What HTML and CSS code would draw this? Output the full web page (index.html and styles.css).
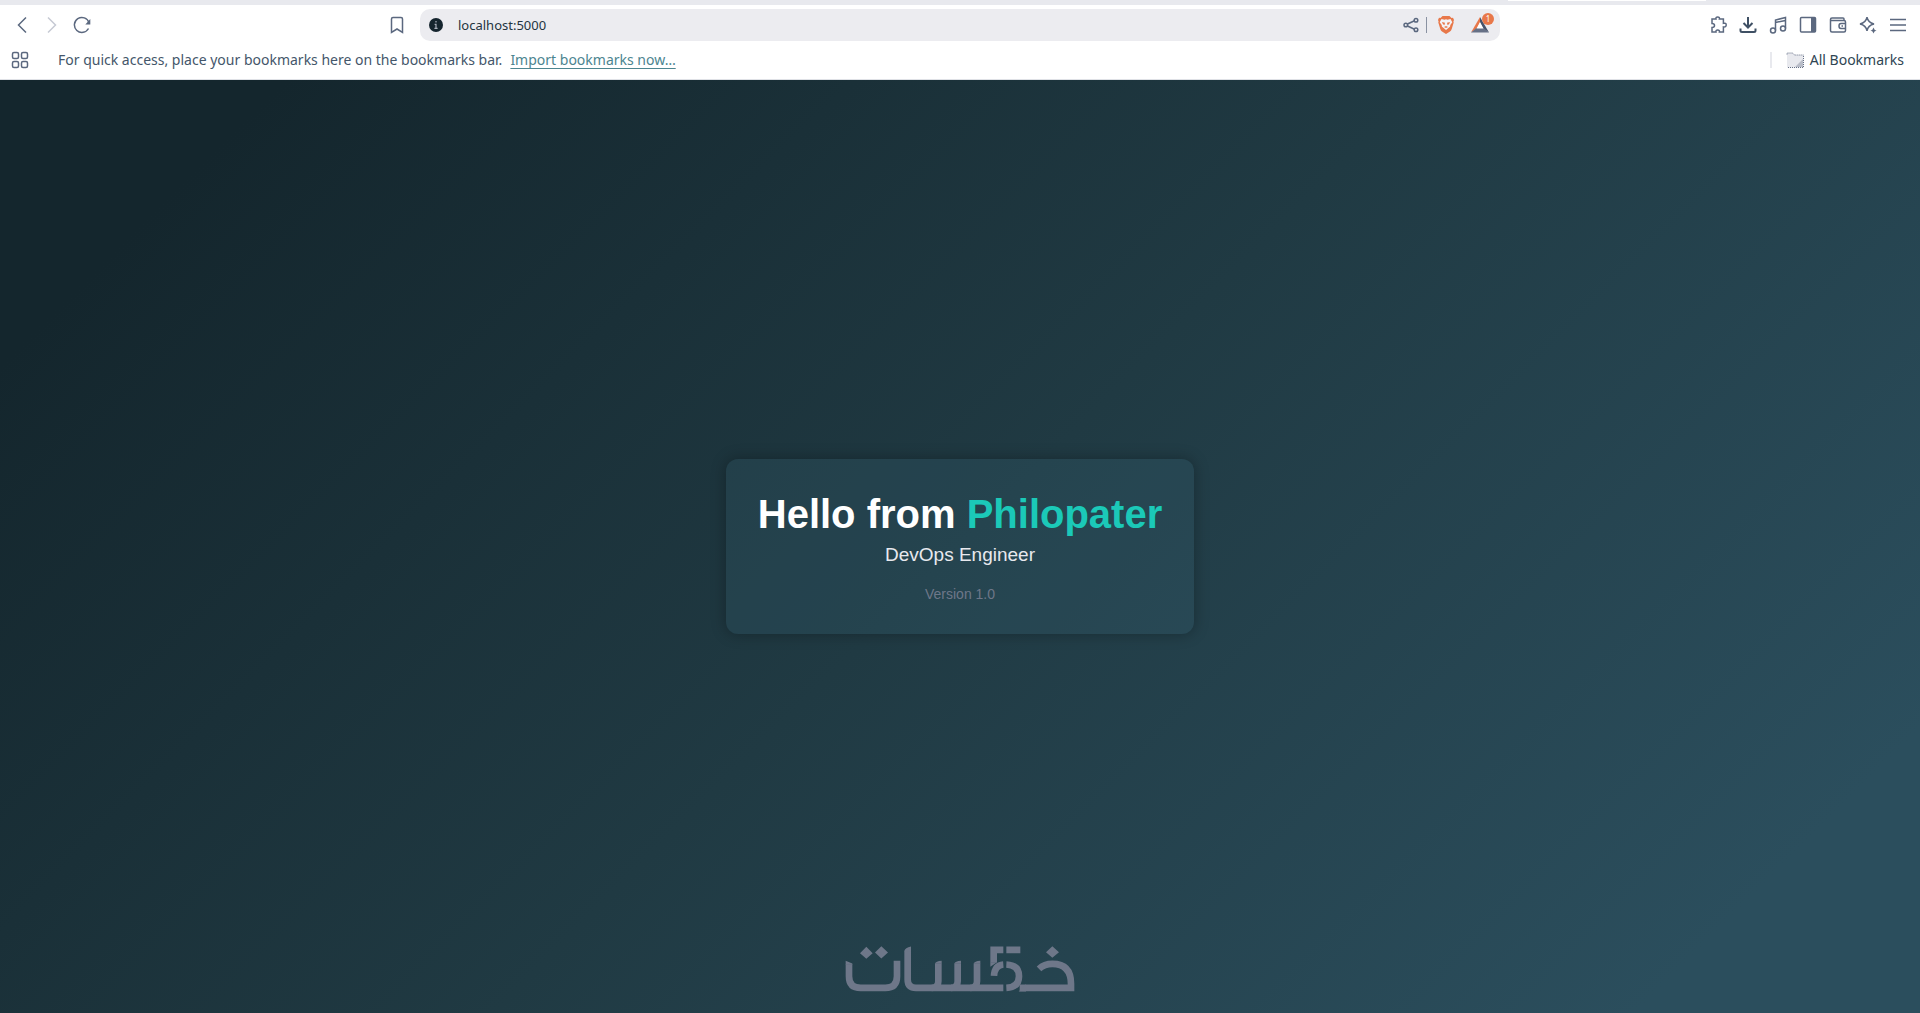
FILE: index.html
```html
<!DOCTYPE html>
<html lang="en">
<head>
<meta charset="utf-8">
<meta name="viewport" content="width=device-width, initial-scale=1">
<title>Hello from Philopater</title>
<link rel="stylesheet" href="styles.css">
</head>
<body>
<header class="browser">
  <div class="tabstrip"><span class="active-tab"></span></div>
  <div class="toolbar">
    <nav class="nav" aria-label="Navigation">
      <button class="icon-btn" aria-label="Back"><svg class="icon" viewBox="0 0 18 18"><path d="M13 1.500 5.500 9 13 16.500"/></svg></button>
      <button class="icon-btn disabled" aria-label="Forward" disabled><svg class="icon" viewBox="0 0 18 18"><path d="M5 1.500 12.500 9 5 16.500"/></svg></button>
      <button class="icon-btn" aria-label="Reload"><svg class="icon" viewBox="0 0 18 18"><path d="M15.500 12.500A7.500 7.500 0 1 1 16 6.500"/><path class="solid" d="M17.300 3v5.500h-5z"/></svg></button>
      <button class="icon-btn bookmark" aria-label="Bookmark this page"><svg class="icon" viewBox="0 0 18 18"><path d="M3.500 16.500V3q0-1.500 1.500-1.500h8q1.500 0 1.500 1.500v13.500L9 13z"/></svg></button>
    </nav>
    <form class="address">
      <svg class="info" viewBox="0 0 14 14"><circle cx="7" cy="7" r="7" fill="#15252e"/><path d="M7 3v1.600M5.600 6.300H7v4M5.400 10.300h3.200" stroke="#aab0bb" stroke-width="1.200" fill="none"/></svg>
      <input class="url" type="text" value="localhost:5000" aria-label="Address">
      <button type="button" class="icon-btn" aria-label="Share"><svg class="icon" viewBox="0 0 18 18"><path d="M5.500 8 12.500 4.700M5.500 10l7 3.300"/><circle cx="3.800" cy="9" r="1.800"/><circle cx="14" cy="4.200" r="1.800"/><circle cx="14" cy="13.800" r="1.800"/></svg></button>
      <span class="divider"></span>
      <button type="button" class="icon-btn shield" aria-label="Shields"><svg class="icon" viewBox="0 0 18 18"><path fill="#e8784a" stroke="none" d="M5.500 0h7l2 2 1.500-.2 1 2.200-.6 1.500.3 1-2 6.500q-.5 1.500-1.700 2.500L9 18l-4-2.500Q3.800 14.500 3.300 13l-2-6.500.3-1L1 4l1-2.200 1.500.2z"/><path fill="#f3f3f6" stroke="none" d="m4.500 3 3 .7L9 3.300l1.500.4 3-.7 1.800 3.200-2 2.900q.3 1.900-1.300 2.500L9 14l-3-2.400q-1.600-.6-1.300-2.500l-2-2.900z"/><path fill="#e8784a" stroke="none" d="m5 6 3 .8-.6 2.400L5.800 8zM13 6l-3 .8.6 2.400L12.200 8zM7 11l2-1 2 1-2 .9z"/></svg></button>
      <button type="button" class="icon-btn rewards" aria-label="Rewards, 1 notification"><svg class="icon" viewBox="0 0 18 18"><path fill="#e8784a" stroke="none" d="M9 1 0 16.500l6-4L9 7z"/><path fill="#46536b" stroke="none" d="m9 1 9 15.500-6-4L9 7z"/><path fill="#667086" stroke="none" d="M0 16.500 5.500 12h7l5.500 4.500z"/><path fill="#fff" stroke="none" d="m9 6 3.500 6.500h-7z"/></svg><span class="badge">1</span></button>
    </form>
    <div class="tools">
      <button class="icon-btn" aria-label="Extensions"><svg class="icon" viewBox="0 0 18 18"><path d="M3 3h4q-.5-2 1.700-2t1.700 2h4v4.300q2.800-.5 2.800 1.700t-2.800 1.900V16h-4q.4-2-1.700-2T7 16H3v-4.500q2.500 0 2.500-2T3 7.500z"/></svg></button>
      <button class="icon-btn strong" aria-label="Downloads"><svg class="icon" viewBox="0 0 18 18"><path d="M9 1v10M4.500 7 9 11.500 13.500 7M1.500 12.500v2q0 1.500 1.500 1.500h12q1.500 0 1.500-1.500v-2"/></svg></button>
      <button class="icon-btn" aria-label="Media"><svg class="icon" viewBox="0 0 18 18"><path d="M6.500 14.500V4L16.500 1.500v11M6.500 6.500l10-2"/><circle cx="4" cy="14.500" r="2.500"/><circle cx="14" cy="12.500" r="2.500"/></svg></button>
      <button class="icon-btn" aria-label="Side panel"><svg class="icon" viewBox="0 0 18 18"><rect x="1.500" y="1.500" width="15" height="14.500" rx="1"/><path class="solid" d="M12 2h4.500v14H12z"/></svg></button>
      <button class="icon-btn" aria-label="Wallet"><svg class="icon" viewBox="0 0 18 18"><path d="M15 4.500V3q0-1-1-1H3q-1.500 0-1.500 1.500v11Q1.500 16 3 16h12q1.500 0 1.500-1.500V6q0-1.500-1.500-1.500H2M16.500 7.500H12q-2 0-2 2.500t2 2.500h4.500M12.500 10h1.500"/></svg></button>
      <button class="icon-btn" aria-label="Assistant"><svg class="icon" viewBox="0 0 18 18"><path d="M8 1.200q1 5.500 7 6.800-6 1.300-7 6.800Q7 9.300 1 8q6-1.300 7-6.800z"/><path class="solid" d="M14.500 11.500q.5 2.500 3 3-2.500.5-3 3-.5-2.500-3-3 2.500-.5 3-3z"/></svg></button>
      <button class="icon-btn" aria-label="Menu"><svg class="icon" viewBox="0 0 18 18"><path d="M1 3.500h16M1 9h16M1 14.500h16"/></svg></button>
    </div>
  </div>
  <div class="bookmarks">
    <button class="icon-btn" aria-label="Apps"><svg class="icon" viewBox="0 0 18 18"><rect x="1.500" y="1.500" width="6" height="6" rx="1.500"/><rect x="10.500" y="1.500" width="6" height="6" rx="1.500"/><rect x="1.500" y="10.500" width="6" height="6" rx="1.500"/><rect x="10.500" y="10.500" width="6" height="6" rx="1.500"/></svg></button>
    <p class="hint"><span>For quick access, place your bookmarks here on the bookmarks bar.</span><a class="import" href="#">Import bookmarks now…</a></p>
    <button class="all"><svg class="folder" viewBox="0 0 18 16"><path fill="#e8e9ee" d="M1 1h6l2 2h8.500v12.500H1z"/><path d="M1 2.500V1h5.500l2 2h9M17.500 4v11.500H2" fill="none" stroke="#667086" stroke-dasharray="1 1"/><path d="m17 7-8 8h8z" fill="#b9bdc8"/></svg>All Bookmarks</button>
  </div>
</header>
<main class="page">
  <section class="card">
    <h1 class="title">Hello from <span class="name">Philopater</span></h1>
    <p class="role">DevOps Engineer</p>
    <p class="version">Version 1.0</p>
  </section>
  <svg class="watermark" viewBox="44 50 690 137" role="img" aria-label="خمسات">
    <g fill="none" stroke="#6e7789" stroke-width="20">
      <path d="M56 104v36q0 35 35 35h74q35 0 35-35V94"/>
      <path d="M232 64v86q0 25 25 25h262"/>
      <path d="M324 102v53q0 20-20 20M382 102v53q0 20-20 20M440 102v53q0 20-20 20"/>
      <path d="M519 61h-29v38M528 61h42"/>
      <path d="M519 105q-26 2-28 34M528 105q38 2 38 35t-38 35"/>
      <path d="M626 118q16-15 40-15 56 0 56 60v12H568"/>
    </g>
    <g fill="#6e7789"><path d="m108 52 19 19-19 17-19-17zM153 50l20 19-20 18-19-18zM666 50l20 18-20 17-19-17zM565 186l22-22v22z"/><path d="m46 94 20 8v4H46zM222 65q2-10 20-14v14zM314 103q2-8 20-9v9zM372 103q2-8 20-9v9zM430 103q2-8 20-9v9zM480 98h20l-20 14z"/></g>
  </svg>
</main>
</body>
</html>
```
FILE: styles.css
```css
* { box-sizing: border-box; }

body {
  margin: 0;
  min-height: 100vh;
  display: flex;
  flex-direction: column;
  font-family: "Liberation Sans", Arial, sans-serif;
}

button {
  padding: 0;
  border: 0;
  background: none;
  font: inherit;
  color: inherit;
}

.browser {
  background: #fff;
  border-bottom: 1px solid #dfe1e6;
  color: #44566a;
  font: 14px/20px "Noto Sans", sans-serif;
}

.tabstrip {
  display: flex;
  justify-content: flex-end;
  height: 5px;
  padding-right: 214px;
  background: #e8e9ee;
}

.active-tab {
  width: 198px;
  height: 1px;
  background: #fff;
}

.toolbar {
  display: grid;
  grid-template-columns: minmax(160px, 1fr) minmax(0, 1080px) minmax(220px, 1fr);
  align-items: center;
  padding: 4px 0;
}

.nav {
  display: flex;
  padding: 0 8px 0 7px;
}

.bookmark { margin-left: auto; }

.icon-btn {
  position: relative;
  display: grid;
  place-items: center;
  flex: none;
  width: 30px;
  height: 30px;
  color: #5b687f;
}

.disabled { color: #c6cad4; }
.strong { color: #3f5064; }
.strong .icon { stroke-width: 2; }

.icon {
  width: 18px;
  height: 18px;
  fill: none;
  stroke: currentColor;
  stroke-width: 1.5;
}

.icon .solid {
  fill: currentColor;
  stroke: none;
}

.address {
  display: flex;
  align-items: center;
  height: 32px;
  padding: 0 5px 0 9px;
  border-radius: 10px;
  background: #ececf0;
}

.info {
  width: 14px;
  height: 14px;
}

.url {
  flex: 1;
  min-width: 0;
  padding: 0 15px;
  border: 0;
  outline: 0;
  background: none;
  color: #24343f;
  font: 13px/20px "Noto Sans", sans-serif;
}

.divider {
  width: 1px;
  height: 16px;
  background: #8a92a2;
}

.shield { margin-left: 4px; }
.rewards { margin-left: 4px; }

.badge {
  position: absolute;
  top: 3px;
  right: 1px;
  width: 12px;
  height: 12px;
  border-radius: 6px;
  background: #e8784a;
  color: #fff;
  font-size: 8px;
  line-height: 12px;
}

.tools {
  display: flex;
  justify-content: flex-end;
  padding-right: 7px;
}

.bookmarks {
  display: flex;
  align-items: center;
  height: 34px;
  padding: 0 16px 4px 5px;
}

.hint {
  display: flex;
  gap: 8px;
  margin: 0 auto 0 23px;
}

.import {
  color: #4c8590;
  text-underline-offset: 3px;
}

.all {
  display: flex;
  align-items: center;
  gap: 6px;
  color: #2f4553;
}

.all::before {
  content: "";
  width: 2px;
  height: 16px;
  margin-right: 8px;
  background: #e8e9ee;
}

.folder {
  width: 18px;
  height: 16px;
}

.page {
  flex: 1;
  display: grid;
  place-items: center;
  background: linear-gradient(135deg, #14262d 10%, #203a43 50%, #2b4e5d 90%);
  color: #fff;
  text-align: center;
}

.card,
.watermark { grid-area: 1 / 1; }

.card {
  padding: 32px;
  border-radius: 12px;
  background: rgba(60, 110, 130, 0.2);
  box-shadow: 0 0 15px rgba(0, 0, 0, 0.3);
}

.title {
  margin: 0;
  font-size: 40px;
  line-height: 46px;
}

.name { color: #1bc9b8; }

.role {
  margin: 7px 0 0;
  color: #e8e9ee;
  font-size: 19px;
  line-height: 22px;
}

.version {
  margin: 20px 0 0;
  color: #6e7789;
  font-size: 14px;
  line-height: 16px;
}

.watermark {
  align-self: end;
  width: 230px;
  height: 46px;
  margin-bottom: 21px;
}
```
